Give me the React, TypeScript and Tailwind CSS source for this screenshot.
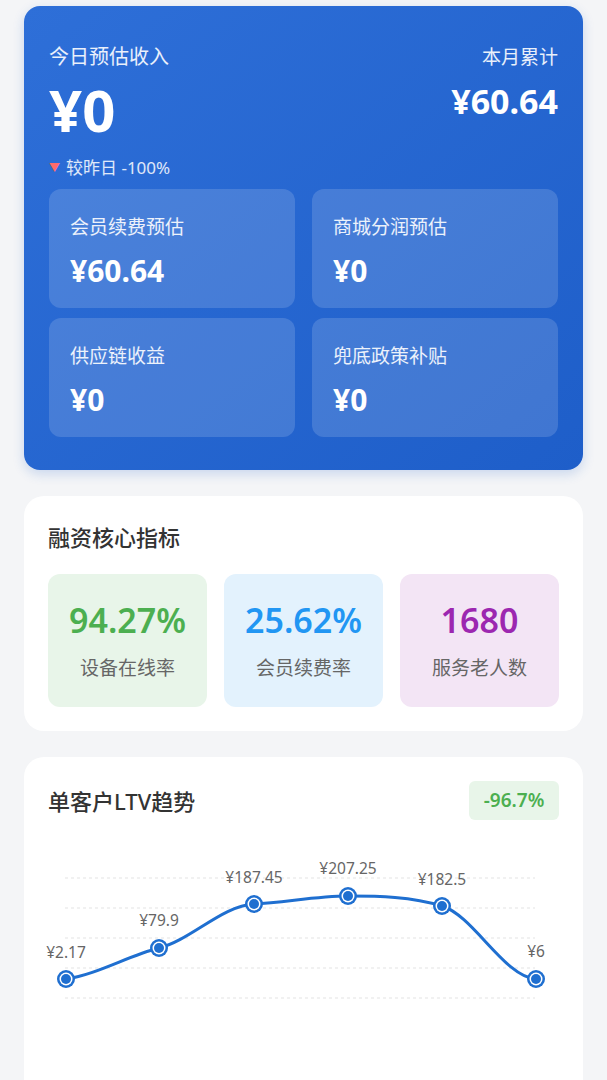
const font = { fontFamily: '"Noto Sans", "Noto Sans CJK SC", sans-serif' };

const incomeCards = [
  { label: "会员续费预估", value: "¥60.64" },
  { label: "商城分润预估", value: "¥0" },
  { label: "供应链收益", value: "¥0" },
  { label: "兜底政策补贴", value: "¥0" },
];

const metrics = [
  { value: "94.27%", label: "设备在线率", box: "bg-[#e8f5e9]", text: "text-[#4caf50]" },
  { value: "25.62%", label: "会员续费率", box: "bg-[#e3f2fd]", text: "text-[#2196f3]" },
  { value: "1680", label: "服务老人数", box: "bg-[#f3e5f5]", text: "text-[#9c27b0]" },
];

const points = [
  { x: 18, y: 139, label: "¥2.17", ly: 118 },
  { x: 111, y: 108, label: "¥79.9", ly: 86 },
  { x: 206, y: 64, label: "¥187.45", ly: 43 },
  { x: 300, y: 56, label: "¥207.25", ly: 34 },
  { x: 394, y: 66, label: "¥182.5", ly: 45 },
  { x: 488, y: 139, label: "¥6", ly: 117 },
];

const linePath =
  "M18 139 C49 134.4 80 115.8 111 108 C142.7 100.1 174.3 65.6 206 64 C237.3 62.4 268.7 56 300 56 C331.3 56 362.7 56.6 394 66 C425.3 75.4 456.7 137.4 488 139";

function TrendChart() {
  return (
    <svg width="511" height="200" viewBox="0 0 511 200" className="block overflow-visible">
      {[38, 68, 98, 128, 158].map((y) => (
        <line key={y} x1="17" x2="487" y1={y} y2={y} stroke="#e3e3e3" strokeWidth="1" strokeDasharray="3 3" />
      ))}
      <path d={linePath} fill="none" stroke="#1f6fd0" strokeWidth="3" strokeLinecap="round" />
      {points.map((p) => (
        <g key={p.label}>
          <circle cx={p.x} cy={p.y} r="9" fill="#1f6fd0" />
          <circle cx={p.x} cy={p.y} r="6.5" fill="#ffffff" />
          <circle cx={p.x} cy={p.y} r="5" fill="#1f6fd0" />
          <text x={p.x} y={p.ly} textAnchor="middle" fontSize="15.5" fill="#666666" style={font}>
            {p.label}
          </text>
        </g>
      ))}
    </svg>
  );
}

export default function App() {
  return (
    <div className="min-h-[1080px] bg-[#f4f5f7] px-6 pt-[6px]" style={font}>
      <div className="rounded-2xl bg-gradient-to-br from-[#2e6fd8] to-[#1e5ec9] px-[25px] pt-[37px] pb-[33px] shadow-[0_4px_12px_rgba(30,94,201,0.2)]">
        <div className="flex items-start justify-between">
          <div>
            <div className="text-[20px] leading-[28px] text-white/90">今日预估收入</div>
            <div className="mt-[10px] text-[58px] font-bold leading-[58px] text-white">¥0</div>
            <div className="mt-[17px] flex items-center gap-[6px] text-[17px] leading-[24px] text-white/85">
              <span className="text-[11px] text-[#ff6b6b]">▼</span>
              <span>较昨日 -100%</span>
            </div>
          </div>
          <div className="text-right">
            <div className="text-[19px] leading-[28px] text-white/90">本月累计</div>
            <div className="mt-[10px] text-[34px] font-bold leading-[40px] text-white">¥60.64</div>
          </div>
        </div>
        <div className="mt-[9px] grid grid-cols-2 gap-x-[17px] gap-y-[10px]">
          {incomeCards.map((c) => (
            <div key={c.label} className="h-[119px] rounded-xl bg-white/15 pl-[21px] pt-[24px]">
              <div className="text-[19px] leading-[28px] text-white/90">{c.label}</div>
              <div className="mt-[12px] text-[30px] font-bold leading-[36px] text-white">{c.value}</div>
            </div>
          ))}
        </div>
      </div>

      <div className="mt-[26px] rounded-[20px] bg-white px-6 pt-6 pb-6">
        <div className="text-[22px] font-medium leading-[34px] text-[#333333]">融资核心指标</div>
        <div className="mt-5 grid grid-cols-3 gap-[17px]">
          {metrics.map((m) => (
            <div key={m.label} className={`flex h-[133px] flex-col items-center rounded-xl pt-[26px] ${m.box}`}>
              <div className={`text-[34px] font-semibold leading-[40px] ${m.text}`}>{m.value}</div>
              <div className="mt-[14px] text-[19px] leading-[28px] text-[#666666]">{m.label}</div>
            </div>
          ))}
        </div>
      </div>

      <div className="mt-[26px] min-h-[340px] rounded-t-[20px] bg-white px-6 pt-6">
        <div className="flex items-center justify-between">
          <div className="text-[22px] font-medium leading-[34px] text-[#333333]">单客户LTV趋势</div>
          <div className="flex h-[39px] w-[90px] items-center justify-center rounded-md bg-[#e8f5e9] text-[19px] font-semibold text-[#4caf50]">
            -96.7%
          </div>
        </div>
        <div className="mt-5">
          <TrendChart />
        </div>
      </div>
    </div>
  );
}
